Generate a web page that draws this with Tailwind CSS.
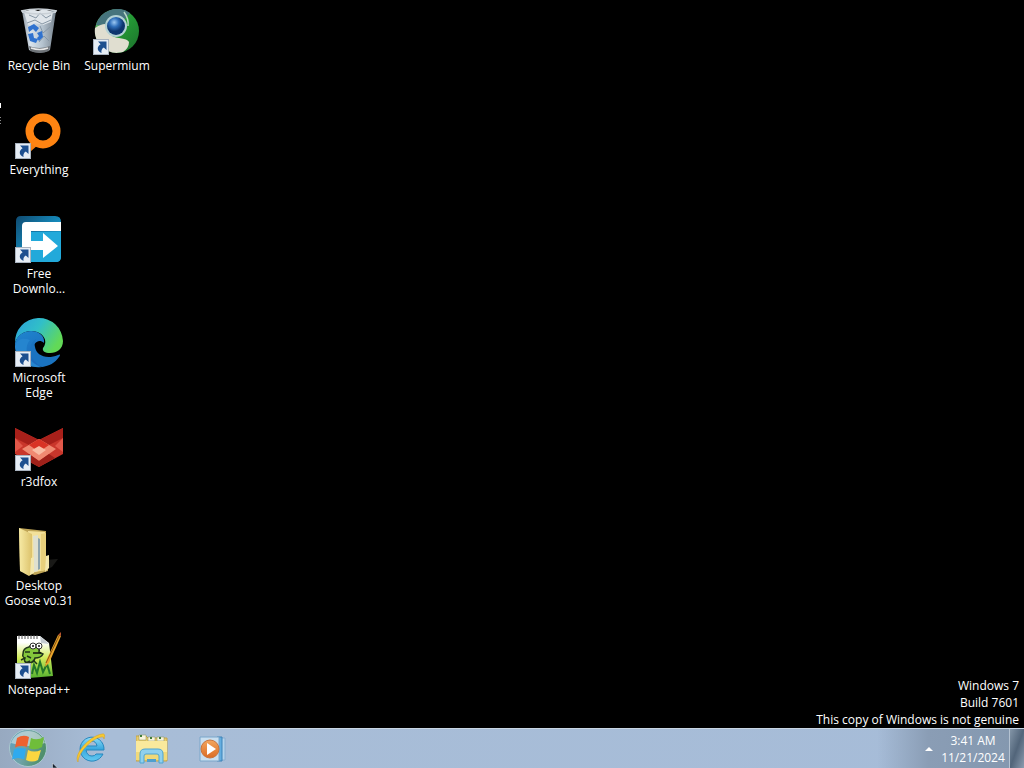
<!DOCTYPE html>
<html lang="en">
<head>
  <meta charset="UTF-8">
  <meta name="viewport" content="width=device-width, initial-scale=1.0">
  <title>Desktop</title>
  <script src="https://cdn.jsdelivr.net/npm/@tailwindcss/browser@4"></script>
</head>
<body class="min-h-screen flex flex-col overflow-hidden bg-black text-white text-[12px] leading-[15px] font-['Open_Sans','Noto_Sans',sans-serif]">

  <!-- Shared shapes -->
  <svg class="absolute size-0">
    <defs>
      <symbol id="shortcut" viewBox="0 0 16 16">
        <rect x=".5" y=".5" width="15" height="15" fill="#e6edf5" stroke="#a9b3bf"/>
        <path d="M5 2.500h8.500V11l-2.700-2.600C8.700 9.800 8 11.500 8.600 14 4 12 3.400 8 7.600 5.200z" fill="#1d4f8f"/>
      </symbol>
      <linearGradient id="bin" x2="1">
        <stop offset="0" stop-color="#8e99a3"/><stop offset=".25" stop-color="#d9e3ec"/><stop offset=".6" stop-color="#b5c3cf"/><stop offset="1" stop-color="#77838e"/>
      </linearGradient>
      <radialGradient id="orb" cx=".4" cy=".3">
        <stop offset="0" stop-color="#9cc8f2"/><stop offset=".5" stop-color="#2f6fba"/><stop offset="1" stop-color="#0d356e"/>
      </radialGradient>
      <linearGradient id="green" x2="1" y2="1">
        <stop offset="0" stop-color="#7cc47d"/><stop offset=".5" stop-color="#249a35"/><stop offset="1" stop-color="#1c6f2c"/>
      </linearGradient>
      <linearGradient id="fdm" x2="1" y2="1">
        <stop offset="0" stop-color="#0f4a70"/><stop offset=".5" stop-color="#1587b8"/><stop offset="1" stop-color="#25b2e2"/>
      </linearGradient>
      <linearGradient id="edgeTop" x2="1" y2=".5">
        <stop offset="0" stop-color="#2a9fdc"/><stop offset=".5" stop-color="#31bfc8"/><stop offset="1" stop-color="#62d957"/>
      </linearGradient>
      <linearGradient id="edgeSide" x2=".6" y2="1">
        <stop offset="0" stop-color="#1f86cf"/><stop offset="1" stop-color="#1b64b8"/>
      </linearGradient>
      <linearGradient id="folder" x2="1">
        <stop offset="0" stop-color="#f7eba6"/><stop offset="1" stop-color="#dcc26b"/>
      </linearGradient>
      <linearGradient id="page" y2="1" x2="0">
        <stop offset=".15" stop-color="#ffffff"/><stop offset=".5" stop-color="#d3ec5c"/><stop offset="1" stop-color="#4fae2c"/>
      </linearGradient>
      <linearGradient id="start" x2="1" y2=".3">
        <stop offset="0" stop-color="#5f9fbd"/><stop offset=".5" stop-color="#6fa3a8"/><stop offset="1" stop-color="#4f8f6c"/>
      </linearGradient>
      <linearGradient id="ie" y2="1" x2="0">
        <stop offset="0" stop-color="#8fdcf8"/><stop offset=".5" stop-color="#37a8df"/><stop offset="1" stop-color="#64c9f1"/>
      </linearGradient>
      <linearGradient id="play" y2="1" x2="0">
        <stop offset="0" stop-color="#f3a65e"/><stop offset="1" stop-color="#dc6c24"/>
      </linearGradient>
    </defs>
  </svg>

  <!-- Desktop -->
  <main class="relative flex-1 flex justify-between">
    <div class="grid grid-flow-col grid-rows-[repeat(7,104px)] auto-cols-[78px]">

      <button class="flex flex-col items-center pt-2 gap-0.5">
        <svg class="size-12 shrink-0" viewBox="0 0 48 48">
          <path d="M7 3h34l-6 39q-10 5-21 0z" fill="url(#bin)"/>
          <path d="M9 4l8-3 6 2 6-2 9 3-2 10-8 3-8-2-7 2z" fill="#dfe5ea"/>
          <path d="M14 7l7 3 4-5 6 5 5-3M12 15l8-3 7 4 9-4M25 18l3 7 7-6M24 34l5-6 5 5" stroke="#8797a5" fill="none"/>
          <path d="M6 3q17-4 36 0M7 4q17 4 34 0" stroke="#c9d0d6" stroke-width="1.500" fill="none"/>
          <path d="M14 38q10 4 21 0l-1 5q-9 4-19 0z" fill="#6e7378"/>
          <path d="M16 40q9 3 17 0" stroke="#e8e8e8" stroke-width="1.500" fill="none"/>
          <path d="M13 19l6-3 5 4-3 4-3-3-4 3zM13 26l5-1 1 5 4 1-2 4-6-2zM22 25l5-2 1 6-4 4-2-3 2-2z" fill="#2f72cf"/>
        </svg>
        <span>Recycle Bin</span>
      </button>

      <button class="flex flex-col items-center pt-2 gap-0.5">
        <svg class="size-12 shrink-0" viewBox="0 0 48 48">
          <path d="M10 36L18 27l6 5-9 8z" fill="#f77f10"/>
          <circle cx="28" cy="19" r="13.500" fill="none" stroke="#ff8412" stroke-width="8"/>
          <use href="#shortcut" y="31" width="16" height="16"/>
        </svg>
        <span>Everything</span>
      </button>

      <button class="flex flex-col items-center pt-2 gap-0.5">
        <svg class="size-12 shrink-0" viewBox="0 0 48 48">
          <path d="M6 0h34q6 0 6 6v34q0 6-6 6H1V5q0-5 5-5z" fill="url(#fdm)"/>
          <path d="M16 16h30v25q0 5-5 5H16z" fill="#22a9da"/>
          <path d="M7 10q0-4 4-4h35v9H16v24H7z" fill="#fff"/>
          <path d="M16 25h12v-8l15 13-15 12v-8H16z" fill="#fff"/>
          <use href="#shortcut" y="31" width="16" height="16"/>
        </svg>
        <span class="w-16">Free Downlo...</span>
      </button>

      <button class="flex flex-col items-center pt-2 gap-0.5">
        <svg class="size-12 shrink-0 overflow-visible" viewBox="0 0 48 48">
          <path d="M0 23A24 24 0 0 1 48 21c0 8-6 12-13 12-5 0-8-2-7-5 6-7 0-17-12-17C8 11 2 16 0 23z" fill="url(#edgeTop)"/>
          <path d="M0 23c2-8 9-12 16-12 9 0 14 6 13 12-5-5-11 0-11 6 0 9 12 14 26 7A24 24 0 0 1 0 23z" fill="url(#edgeSide)"/>
          <path d="M21 19c-8 5-9 20 6 28 7-1 13-4 17-10 2-3 1-3-1-2-12 5-22 0-23-8-1-3 0-6 1-8z" fill="#1a73c0"/>
          <path d="M15 20c-7 8-3 23 12 27-17 2-27-9-27-21 2-7 8-9 15-6z" fill="#2585cf"/>
          <use href="#shortcut" y="31" width="16" height="16"/>
        </svg>
        <span class="w-16">Microsoft Edge</span>
      </button>

      <button class="flex flex-col items-center pt-2 gap-0.5">
        <svg class="size-12 shrink-0" viewBox="0 0 48 48">
          <path d="M0 4l24 12L48 4v26L24 43 0 30z" fill="#c9362b"/>
          <path d="M0 4l24 12-10 5L0 14zM48 4L24 16l10 5 14-7z" fill="#a8201a"/>
          <path d="M0 14l8 8-8 6zM48 14l-8 8 8 6z" fill="#e2584a"/>
          <path d="M24 15l17 10-17 12L7 25z" fill="#f08a72"/>
          <path d="M24 15l10 6-10 7-10-7z" fill="#d93325"/>
          <path d="M24 22l7 4-7 5-7-5z" fill="#f9bda5"/>
          <path d="M14 30l10 7 10-7 6 4-16 9-16-9z" fill="#9f211a"/>
          <use href="#shortcut" y="31" width="16" height="16"/>
        </svg>
        <span>r3dfox</span>
      </button>

      <button class="flex flex-col items-center pt-2 gap-0.5">
        <svg class="size-12 shrink-0" viewBox="0 0 48 48">
          <path d="M30 32l13-1-6 8-7 3z" fill="#191917"/>
          <path d="M4 0l27 3v25l2 1v14l-13 4L5 43z" fill="#bfa557"/>
          <path d="M13 3l17 1v38l-14 3z" fill="#f3e19a"/>
          <path d="M18 8l5-1v36l-4 1z" fill="#dfe0cf"/>
          <path d="M23 10l2 1v30l-2 1z" fill="#8da4ac"/>
          <path d="M26 6l5-1v37l-5 1z" fill="#e8d07c"/>
          <path d="M4 0l13 6v40l-3 2-9-5z" fill="url(#folder)"/>
          <path d="M16 30l3-1v16l-4 2zM31 28l3-1v13l-4 4z" fill="#f3e7ae"/>
        </svg>
        <span class="w-18">Desktop Goose v0.31</span>
      </button>

      <button class="flex flex-col items-center pt-2 gap-0.5">
        <svg class="size-12 shrink-0" viewBox="0 0 48 48">
          <path d="M2 4h23l9 7 4 33-36 3z" fill="url(#page)"/>
          <path d="M25 4l1 7 8 1z" fill="#c4cbd0"/>
          <path d="M4 3v4M7 3v4M10 3v4M13 3v4M16 3v4M19 3v4M22 3v4" stroke="#555"/>
          <path d="M8 22q0-6 6-7 2-3 6-1 5 1 4 6l4 2q-2 4-8 4-1 5-7 5-5-1-3-5-3-1-2-4z" fill="#84c63b" stroke="#20351a" stroke-width="1.500"/>
          <path d="M10 20h5M12 24l4 2M15 29l-6 3M18 28l4 4M10 26l-4 2" stroke="#20351a" stroke-width="1.500"/>
          <circle cx="18" cy="14" r="3" fill="#fff" stroke="#333"/>
          <circle cx="24" cy="14" r="3" fill="#fff" stroke="#333"/>
          <path d="M18 13v2M24 13v2M18 21h8" stroke="#111" stroke-width="1.500"/>
          <path d="M17 42l2-9 3 8 3-11 3 10 4-8 3 10" stroke="#23752a" stroke-width="2" fill="none"/>
          <path d="M43 3l3 1-12 27-4 4 1-6z" fill="#e9a52b"/>
          <path d="M43 3l3-3v4z" fill="#b7542e"/>
          <path d="M44 4L31 31" stroke="#8a5413" stroke-width="1"/>
          <use href="#shortcut" y="31" width="16" height="16"/>
        </svg>
        <span>Notepad++</span>
      </button>

      <button class="flex flex-col items-center pt-2 gap-0.5">
        <svg class="size-12 shrink-0" viewBox="0 0 48 48">
          <circle cx="24" cy="23" r="22" fill="url(#green)"/>
          <path d="M3 17A22 22 0 0 1 37 5l-5 6-14-1-5 8z" fill="#46747d"/>
          <path d="M2 20q6-4 10-4 2 13 14 14 9 1 10 4 0 6-6 10A22 22 0 0 1 2 20z" fill="#e0ded0"/>
          <path d="M31 4q5 7 4 14" stroke="#b7d8c4" stroke-width="1.500" fill="none"/>
          <circle cx="23" cy="18" r="11" fill="#b3d1d4"/>
          <circle cx="23" cy="18" r="9" fill="url(#orb)"/>
          <use href="#shortcut" y="31" width="16" height="16"/>
        </svg>
        <span>Supermium</span>
      </button>
    </div>

    <!-- Activation notice -->
    <div class="self-end pr-[5px] text-right leading-[17px]">
      <p>Windows 7</p>
      <p>Build 7601</p>
      <p>This copy of Windows is not genuine</p>
    </div>

    <!-- Sliver of an icon label dragged past the left edge -->
    <svg class="absolute left-0 top-[102px]" width="2" height="22" viewBox="0 0 2 22">
      <path d="M0 1h1v5H0z" fill="#fff"/>
      <path d="M0 15h1v1H0zM0 18h1v1H0zM0 21h1v1H0z" fill="#888"/>
    </svg>
  </main>

  <!-- Taskbar -->
  <footer class="relative h-10 flex items-stretch border-t border-[#c9d6e4] bg-linear-to-r from-[#97a9c0] via-[#a8bdd7] via-10% to-[#a6bcd8]">
    <button class="w-[60px] pl-2 flex items-center" aria-label="Start">
      <svg class="size-10" viewBox="0 0 40 40">
        <circle cx="20" cy="19" r="18.500" fill="url(#start)" stroke="#a9c9cf"/>
        <path d="M3 14A18 18 0 0 1 37 14q-16 6-34 0z" fill="#e6eeee" opacity=".55"/>
        <path d="M9 9q6-4 12-1l-2 10q-6-2-12 .5z" fill="#ee6230"/>
        <path d="M23 9q6 3 13-1l-2 10q-7 4-13 1z" fill="#6fbd3a"/>
        <path d="M6 20.500q6-2.500 12-.5l-2 10.500q-6-3-12 0z" fill="#2faaee"/>
        <path d="M20 21q6 3 13 0l-3 10q-6 3-12 0z" fill="#fbd640"/>
      </svg>
    </button>
    <button class="w-[61px] flex items-center justify-center" aria-label="Internet Explorer">
      <svg class="size-8" viewBox="0 0 32 32">
        <path d="M28 21A12 12 0 1 1 29 17H11q1 6 6 6 3 0 4-2zM11 13h11q-1-5-5.500-5T11 13z" fill="url(#ie)" stroke="#2787bd" fill-rule="evenodd"/>
        <path d="M3 29C-2 22 14 3 27 1q4-1 2 5 0-3-3-2C16 6 3 20 3 29z" fill="#f7c931" stroke="#d69e1d" stroke-width=".5"/>
      </svg>
    </button>
    <button class="w-[61px] flex items-center justify-center" aria-label="Windows Explorer">
      <svg class="size-8" viewBox="0 0 32 32">
        <path d="M0 3h10l2 2h19v23H0z" fill="#e9cd6c" stroke="#c4a54b"/>
        <path d="M3 2h7v5H3zM12 4h7v4h-7zM21 4h7v4h-7z" fill="#f8f4dd" stroke="#8b8c55" stroke-width=".5"/>
        <path d="M4 3h2M14 5h2M23 5h2" stroke="#3f7d3b" stroke-width="2"/>
        <path d="M0 8h31v19H0z" fill="#fae99c"/>
        <path d="M0 19h31v8H0z" fill="#f1d979"/>
        <path d="M4 30v-9q0-5 5-5h13q5 0 5 5v9h-4v-7q0-2-2-2H10q-2 0-2 2v7z" fill="#8fd0ee" stroke="#4fa5d2"/>
        <path d="M11 29v-3h9v3z" fill="#4f9fce"/>
      </svg>
    </button>
    <button class="w-[61px] flex items-center justify-center" aria-label="Windows Media Player">
      <svg class="size-8" viewBox="0 0 32 32">
        <path d="M22 5h6v22h-6z" fill="#b4d4ec" stroke="#8aaed0"/>
        <path d="M20 4h5v24h-5z" fill="#64aee0" stroke="#3d82b7"/>
        <path d="M3 4h19v24H3z" fill="#c9dff0" stroke="#7ba6ca"/>
        <circle cx="13" cy="16" r="9" fill="url(#play)" stroke="#c9743d"/>
        <path d="M10 10l9 6-9 6z" fill="#fff"/>
      </svg>
    </button>

    <!-- Notification area -->
    <div class="ml-auto pl-4 flex items-stretch bg-linear-to-r from-transparent via-[#8a9db5] via-35% to-[#8397ae]">
      <button class="w-12 pl-6 flex items-center justify-center" aria-label="Show hidden icons">
        <svg class="w-2 h-1" viewBox="0 0 8 4"><path d="M0 4l4-4 4 4z" fill="#fff"/></svg>
      </button>
      <button class="w-16 flex flex-col items-center justify-center leading-[17px]">
        <span>3:41 AM</span>
        <span>11/21/2024</span>
      </button>
      <button class="ml-1 w-[15px] border-l border-[#b4c2d1] bg-linear-to-br from-[#8496a8] via-[#52657a] to-[#8c9caf]" aria-label="Show desktop"></button>
    </div>
  </footer>

  <!-- Mouse pointer -->
  <svg class="absolute left-[52px] bottom-0" width="10" height="5" viewBox="0 0 10 5">
    <path d="M.5 0v5h5z" fill="#16202c" stroke="#e6edf4" stroke-width=".5"/>
  </svg>
</body>
</html>
